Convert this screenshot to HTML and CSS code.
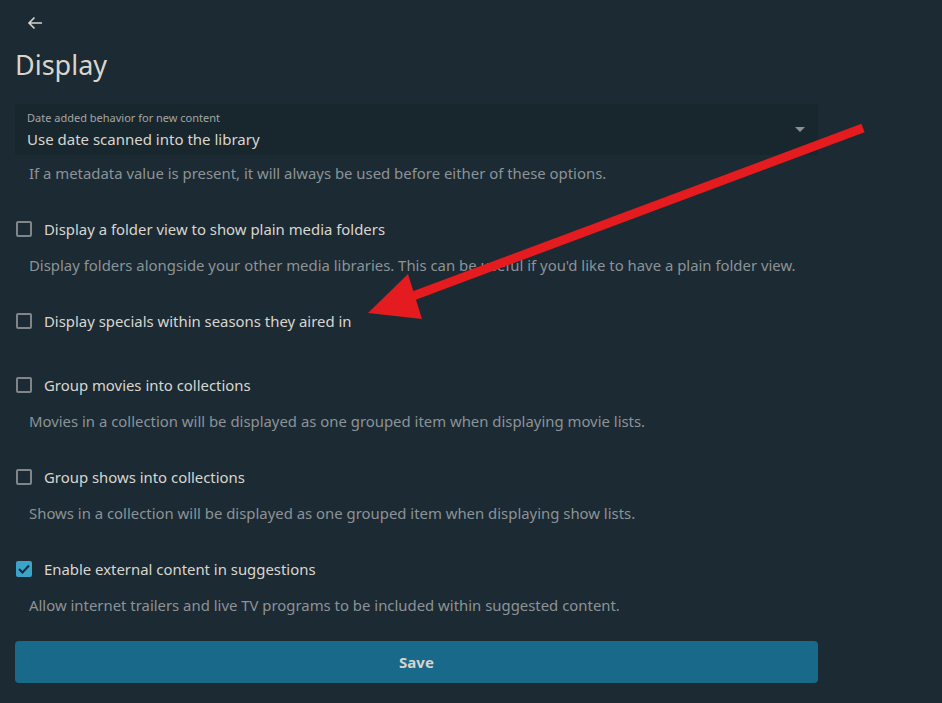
FILE: index.html
```html
<!DOCTYPE html>
<html lang="en">
<head>
<meta charset="utf-8">
<title>Display</title>
<link rel="stylesheet" href="styles.css">
</head>
<body>
<div class="page">
  <div class="topbar">
    <svg class="back" width="16" height="14" viewBox="0 0 16 14"><path d="M15 7H2M7.5 1.5L2 7l5.5 5.5" fill="none" stroke="#d9d5ce" stroke-width="1.6"/></svg>
  </div>
  <h1 class="title">Display</h1>

  <div class="select-group">
    <div class="select">
      <div class="select-label">Date added behavior for new content</div>
      <div class="select-value">Use date scanned into the library</div>
      <span class="caret"></span>
    </div>
    <div class="helper">If a metadata value is present, it will always be used before either of these options.</div>
  </div>

  <div class="item">
    <label class="check"><span class="box"></span><span class="label">Display a folder view to show plain media folders</span></label>
    <div class="desc">Display folders alongside your other media libraries. This can be useful if you'd like to have a plain folder view.</div>
  </div>
  <div class="item nodesc">
    <label class="check"><span class="box"></span><span class="label">Display specials within seasons they aired in</span></label>
  </div>
  <div class="item">
    <label class="check"><span class="box"></span><span class="label">Group movies into collections</span></label>
    <div class="desc">Movies in a collection will be displayed as one grouped item when displaying movie lists.</div>
  </div>
  <div class="item">
    <label class="check"><span class="box"></span><span class="label">Group shows into collections</span></label>
    <div class="desc">Shows in a collection will be displayed as one grouped item when displaying show lists.</div>
  </div>
  <div class="item last">
    <label class="check"><span class="box checked"><svg width="12" height="10" viewBox="0 0 12 10"><path d="M1 5l3.5 3.5L11 1.5" fill="none" stroke="#1b2a33" stroke-width="2"/></svg></span><span class="label">Enable external content in suggestions</span></label>
    <div class="desc">Allow internet trailers and live TV programs to be included within suggested content.</div>
  </div>

  <button class="save">Save</button>
</div>

<svg class="annotation" width="942" height="703" viewBox="0 0 942 703">
  <line x1="863" y1="128" x2="405" y2="299" stroke="#e41b1f" stroke-width="9"/>
  <polygon points="368,313 408,274 422,319" fill="#e41b1f"/>
</svg>
</body>
</html>
```

FILE: styles.css
```css
html, body {
  margin: 0;
  padding: 0;
  background: #1b2a33;
  font-family: "Noto Sans", "Open Sans", sans-serif;
  color: #dad6cf;
}

.page {
  width: 803px;
  padding-left: 15px;
}

.topbar {
  height: 46px;
  display: flex;
  align-items: center;
  padding-left: 12px;
}

.back { display: block; }

.title {
  margin: 0;
  font-size: 27px;
  font-weight: 400;
  line-height: 38px;
  color: #d9d5cd;
}

.select-group {
  margin-top: 20px;
  margin-bottom: 34px;
}

.select {
  position: relative;
  height: 51px;
  box-sizing: border-box;
  padding: 7px 12px 0;
  background: #18262e;
  border-radius: 2px;
}

.select-label {
  font-size: 11px;
  line-height: 14px;
  color: #a5a6a4;
}

.select-value {
  margin-top: 4px;
  font-size: 15px;
  line-height: 20px;
  color: #dad6cf;
}

.caret {
  position: absolute;
  right: 13px;
  top: 23px;
  width: 0;
  height: 0;
  border-left: 5px solid transparent;
  border-right: 5px solid transparent;
  border-top: 5px solid #8b8f91;
}

.helper, .desc {
  padding-left: 14px;
  font-size: 14.9px;
  line-height: 20px;
  color: #8d9397;
}

.helper { margin-top: 8px; }

.item { margin-bottom: 34px; }
.item.nodesc { margin-bottom: 40px; }
.item.last { margin-bottom: 26px; }

.check {
  display: flex;
  align-items: center;
  height: 24px;
}

.box {
  box-sizing: border-box;
  width: 16px;
  height: 16px;
  margin-left: 1px;
  margin-right: 12px;
  border: 2px solid #7f8588;
  border-radius: 2px;
  display: flex;
  align-items: center;
  justify-content: center;
}

.box.checked {
  background: #3ca3cb;
  border-color: #3ca3cb;
}

.label {
  font-size: 14.9px;
  line-height: 20px;
  color: #dad6cf;
}

.desc { margin-top: 14px; }

.save {
  display: block;
  width: 100%;
  height: 42px;
  margin: 0;
  border: none;
  border-radius: 4px;
  background: #19698a;
  color: #d8d4cc;
  font-family: "Noto Sans", "Open Sans", sans-serif;
  font-size: 15px;
  font-weight: 700;
}

.annotation {
  position: absolute;
  left: 0;
  top: 0;
  pointer-events: none;
}
```
